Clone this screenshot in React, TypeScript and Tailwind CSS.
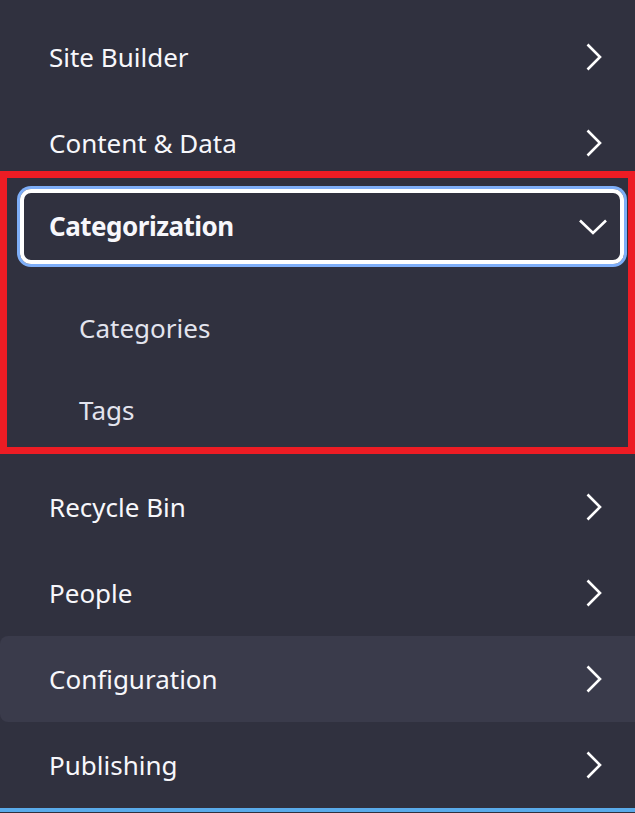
import type { ReactNode } from 'react';

const ChevronRight = () => (
  <svg width="18" height="30" viewBox="0 0 18 30" fill="none" className="shrink-0">
    <path d="M2.5 2.5 L15 15 L2.5 27.5" stroke="#ffffff" strokeWidth="2.6" strokeLinejoin="miter" />
  </svg>
);

const ChevronDown = () => (
  <svg width="30" height="18" viewBox="0 0 30 18" fill="none" className="shrink-0">
    <path d="M2 2.5 L15 15 L28 2.5" stroke="#ffffff" strokeWidth="2.6" strokeLinejoin="miter" />
  </svg>
);

const Row = ({ label, hover = false }: { label: string; hover?: boolean }) => (
  <div
    className={`flex h-[86px] items-center justify-between pl-[49px] pr-[32px] ${hover ? 'rounded-l-lg bg-[#3a3b4b]' : ''}`}
  >
    <span className="text-[#f7f7fb]">{label}</span>
    <ChevronRight />
  </div>
);

const SubItem = ({ children }: { children: ReactNode }) => (
  <div className="flex h-[82px] items-center pl-[79px] text-[#e3e4ee]">{children}</div>
);

export default function App() {
  return (
    <div
      className="relative h-[813px] w-[635px] overflow-hidden bg-[#30313f] text-[26px]"
      style={{ fontFamily: '"Noto Sans", "Open Sans", sans-serif' }}
    >
      <div className="pt-[14px]">
        <Row label="Site Builder" />
        <Row label="Content & Data" />

        {/* раскрытая группа */}
        <div className="h-[86px] pl-[20px] pr-[11px] pt-[3px]">
          <div className="flex h-[75px] items-center justify-between rounded-[11px] border-4 border-white pl-[25px] pr-[12px] ring-3 ring-[#7eaef8]">
            <span className="font-bold tracking-[-0.5px] text-[#f7f7fb]">Categorization</span>
            <ChevronDown />
          </div>
        </div>
        <div className="pt-[15px] pb-[13px]">
          <SubItem>Categories</SubItem>
          <SubItem>Tags</SubItem>
        </div>

        <Row label="Recycle Bin" />
        <Row label="People" />
        <Row label="Configuration" hover />
        <Row label="Publishing" />
        <div className="h-[4px] bg-[#5aabea]" />
      </div>

      {/* красная рамка выделения */}
      <div className="pointer-events-none absolute top-[171px] left-0 h-[283px] w-[635px] border-[7px] border-[#ed1c24]" />
    </div>
  );
}
